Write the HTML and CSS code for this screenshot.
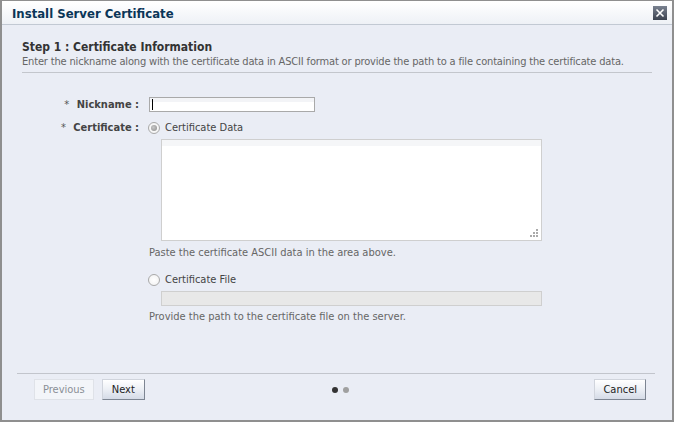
FILE: index.html
```html
<!DOCTYPE html>
<html>
<head>
<meta charset="utf-8">
<link rel="stylesheet" href="styles.css">
</head>
<body>
<div class="dialog">
  <div class="titlebar">
    <span class="title">Install Server Certificate</span>
    <span class="close"><svg width="14" height="14" viewBox="0 0 14 14"><defs><linearGradient id="g" x1="0" y1="0" x2="0" y2="1"><stop offset="0" stop-color="#7a8290"/><stop offset="1" stop-color="#3c4350"/></linearGradient></defs><rect x="0" y="0" width="14" height="14" fill="url(#g)"/><path d="M3.5 3.5 L10.5 10.5 M10.5 3.5 L3.5 10.5" stroke="#fff" stroke-width="1.6"/></svg></span>
  </div>
  <div class="content">
    <div class="step">
      <h2 class="step-title">Step 1 : Certificate Information</h2>
      <p class="step-desc">Enter the nickname along with the certificate data in ASCII format or provide the path to a file containing the certificate data.</p>
    </div>
    <div class="form">
      <div class="label"><span class="req">*</span> Nickname :</div>
      <div class="field"><div class="input"><span class="caret"></span></div></div>
      <div class="label"><span class="req">*</span> Certificate :</div>
      <div class="field">
        <div class="radio-row"><span class="radio checked"></span><span class="rtext">Certificate Data</span></div>
        <div class="textarea"><span class="grip"></span></div>
        <div class="hint">Paste the certificate ASCII data in the area above.</div>
        <div class="radio-row second"><span class="radio"></span><span class="rtext">Certificate File</span></div>
        <div class="disabled-input"></div>
        <div class="hint last">Provide the path to the certificate file on the server.</div>
      </div>
    </div>
    <div class="footer">
      <div class="nav">
        <span class="btn disabled">Previous</span>
        <span class="btn next">Next</span>
      </div>
      <div class="dots"><span class="dot on"></span><span class="dot"></span></div>
      <div class="nav right"><span class="btn">Cancel</span></div>
    </div>
  </div>
</div>
</body>
</html>
```
FILE: styles.css
```css
html, body { margin: 0; padding: 0; }
body { width: 674px; height: 422px; overflow: hidden; background: #eaedf5; font-family: "DejaVu Sans Condensed", "DejaVu Sans", sans-serif; }
.dialog { box-sizing: border-box; width: 674px; height: 422px; border: 2px solid #8f8f8f; border-top-width: 1px; background: #eaedf5; display: flex; flex-direction: column; }
.titlebar { height: 24px; box-sizing: border-box; border-top: 1px solid #fff; border-bottom: 1px solid #c2c9d3; background: linear-gradient(#ffffff, #eef1f6); display: flex; align-items: center; justify-content: space-between; padding: 0 5px 0 10px; }
.title { font-weight: bold; font-size: 13px; color: #0b3658; }
.close { display: flex; }
.content { flex: 1; display: flex; flex-direction: column; padding: 14px 20px 0 15px; }
.step { margin-left: 5px; border-bottom: 1px solid #c3c6cc; padding-bottom: 3px; }
.step-title { margin: 0; font-size: 12px; font-weight: bold; color: #333; line-height: 16px; }
.step-desc { margin: 0; font-size: 11px; color: #666; line-height: 14px; letter-spacing: -0.16px; }
.form { display: grid; grid-template-columns: 122px 1fr; column-gap: 10px; row-gap: 8px; margin-top: 24px; }
.label { text-align: right; font-size: 11px; font-weight: bold; color: #444; line-height: 15px; }
.req { color: #555; font-weight: normal; margin-right: 4px; }
.input { width: 166px; height: 15px; box-sizing: border-box; border: 1px solid #a9a9a9; background: linear-gradient(#f3f4f7 0, #f3f4f7 4px, #fff 4px); position: relative; }
.caret { position: absolute; left: 2px; top: 1px; width: 1px; height: 11px; background: #000; }
.radio-row { display: flex; align-items: center; height: 15px; font-size: 11px; color: #444; }
.radio { width: 12px; height: 12px; box-sizing: border-box; border: 1px solid #a9a9a9; border-radius: 50%; background: radial-gradient(circle, #fff 0, #f0f0f0 100%); margin-left: -1px; margin-right: 5px; position: relative; }
.radio.checked::after { content: ""; position: absolute; left: 2px; top: 2px; width: 6px; height: 6px; border-radius: 50%; background: radial-gradient(circle at 40% 40%, #c8c8c8, #8a8a8a); }
.textarea { margin: 4px 0 0 12px; width: 381px; height: 102px; box-sizing: border-box; border: 1px solid #cfcfcf; background: linear-gradient(#f5f6f8 0, #f5f6f8 6px, #fff 6px); position: relative; }
.grip { position: absolute; right: 3px; bottom: 3px; width: 10px; height: 10px; }
.grip::before { content: ""; position: absolute; right: 0; bottom: 0; width: 2px; height: 2px; background: #aaa; box-shadow: 0 -3px #aaa, 0 -6px #aaa, -3px 0 #aaa, -3px -3px #aaa, -6px 0 #aaa; }
.hint { font-size: 11px; color: #666; line-height: 14px; margin-top: 5px; }
.hint.last { margin-top: 4px; }
.radio-row.second { margin-top: 12px; }
.disabled-input { margin: 4px 0 0 12px; width: 381px; height: 15px; box-sizing: border-box; border: 1px solid #cfcfcf; background: #e8e8e8; }
.footer { margin-top: auto; margin-bottom: 20px; margin-left: 0; margin-right: -3px; border-top: 1px solid #c2c5cc; padding-top: 5px; display: flex; align-items: center; }
.nav { display: flex; gap: 8px; padding-left: 17px; flex: 1; }
.nav.right { justify-content: flex-end; padding-left: 0; padding-right: 9px; }
.btn { font-size: 11px; line-height: 19px; height: 21px; box-sizing: border-box; padding: 0 8px; color: #222; border: 1px solid; border-color: #d0d4dc #7d8592 #7d8592 #d0d4dc; background: linear-gradient(#ffffff, #eef1f6 45%, #d5dbe7); }
.btn.next { padding: 0 9px; }
.btn.disabled { color: #8a8f96; background: #f3f5f9; border-color: #dfe2e8; }
.dots { display: flex; gap: 5px; flex: none; }
.dot { width: 6px; height: 6px; border-radius: 50%; background: #a0a0a0; }
.dot.on { background: #333; }
```
